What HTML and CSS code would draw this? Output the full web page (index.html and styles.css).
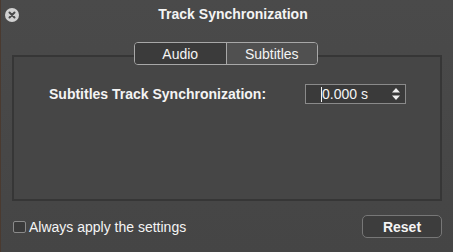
FILE: index.html
```html
<!DOCTYPE html>
<html>
<head>
    <title>Track Synchronization</title>
    <link rel="stylesheet" href="styles.css">
</head>
<body>
    <div class="window">
        <div class="titlebar">
            <div class="close-button">
                <svg width="14" height="14" viewBox="0 0 14 14">
                    <circle cx="7" cy="7" r="7" fill="#d2d2d2"/>
                    <path d="M4.5 4.5 L9.5 9.5 M9.5 4.5 L4.5 9.5" stroke="#4a4a4a" stroke-width="2" stroke-linecap="round"/>
                </svg>
            </div>
            <div class="title">Track Synchronization</div>
            <div></div>
        </div>

        <div class="tabs">
            <div class="tab">Audio</div>
            <div class="tab tab-selected">Subtitles</div>
        </div>

        <div class="panel">
            <div class="sync-row">
                <span class="sync-label">Subtitles Track Synchronization:</span>
                <div class="spin-field">
                    <span class="caret"></span>
                    <span class="spin-value">0.000 s</span>
                    <svg class="stepper" width="8" height="12" viewBox="0 0 8 12">
                        <path d="M4 0 L8 4.5 L0 4.5 Z" fill="#f0f0f0"/>
                        <path d="M4 12 L8 7.5 L0 7.5 Z" fill="#f0f0f0"/>
                    </svg>
                </div>
            </div>
        </div>

        <div class="footer">
            <label class="always-apply">
                <span class="checkbox"></span>
                Always apply the settings
            </label>
            <button class="reset-button">Reset</button>
        </div>
    </div>
</body>
</html>
```

FILE: styles.css
```css
body {
    margin: 0;
    background-color: #474747;
    font-family: "Liberation Sans", Arial, sans-serif;
    font-size: 14px;
    color: #f4f4f4;
}

.window {
    width: 453px;
    height: 252px;
    box-sizing: border-box;
    border-left: 1px solid #4a3a30;
    background: linear-gradient(#4a4a4a, #454545);
}

.titlebar {
    display: grid;
    grid-template-columns: 40px 1fr 40px;
    align-items: center;
    height: 28px;
}

.close-button {
    display: flex;
    padding-left: 4px;
    padding-top: 1px;
}

.title {
    text-align: center;
    font-weight: bold;
    padding-left: 12px;
}

.tabs {
    position: relative;
    z-index: 1;
    display: flex;
    width: 182px;
    height: 21px;
    margin: 14px 0 -10px 133px;
    border: 1px solid #a8a8a8;
    border-radius: 4px;
    overflow: hidden;
}

.tab {
    flex: 1;
    display: flex;
    align-items: center;
    justify-content: center;
    background-color: #3b3b3b;
}

.tab-selected {
    border-left: 1px solid #a8a8a8;
    background-color: #505050;
}

.panel {
    height: 142px;
    margin: 0 11px 0 11px;
    border: 2px solid #363636;
    background-color: #464646;
}

.sync-row {
    display: flex;
    align-items: center;
    padding: 27px 0 0 35px;
}

.sync-label {
    font-weight: bold;
    width: 256px;
}

.spin-field {
    display: flex;
    align-items: center;
    height: 18px;
    border: 1px solid #8a8a8a;
    background-color: #3a3a3a;
    padding-left: 15px;
    width: 84px;
}

.caret {
    width: 1px;
    height: 15px;
    background-color: #f4f4f4;
}

.spin-value {
    flex: 1;
}

.stepper {
    margin-right: 5px;
}

.footer {
    display: flex;
    align-items: center;
    justify-content: space-between;
    padding: 14px 11px 0 12px;
}

.always-apply {
    display: flex;
    align-items: center;
    gap: 3px;
}

.checkbox {
    width: 11px;
    height: 10px;
    border: 1px solid #8a8a8a;
    border-radius: 2px;
    background-color: #3a3a3a;
}

.reset-button {
    width: 80px;
    height: 23px;
    font-family: inherit;
    font-size: 14px;
    font-weight: bold;
    color: #f4f4f4;
    background-color: #3d3d3d;
    border: 1px solid #777;
    border-radius: 5px;
}
```
